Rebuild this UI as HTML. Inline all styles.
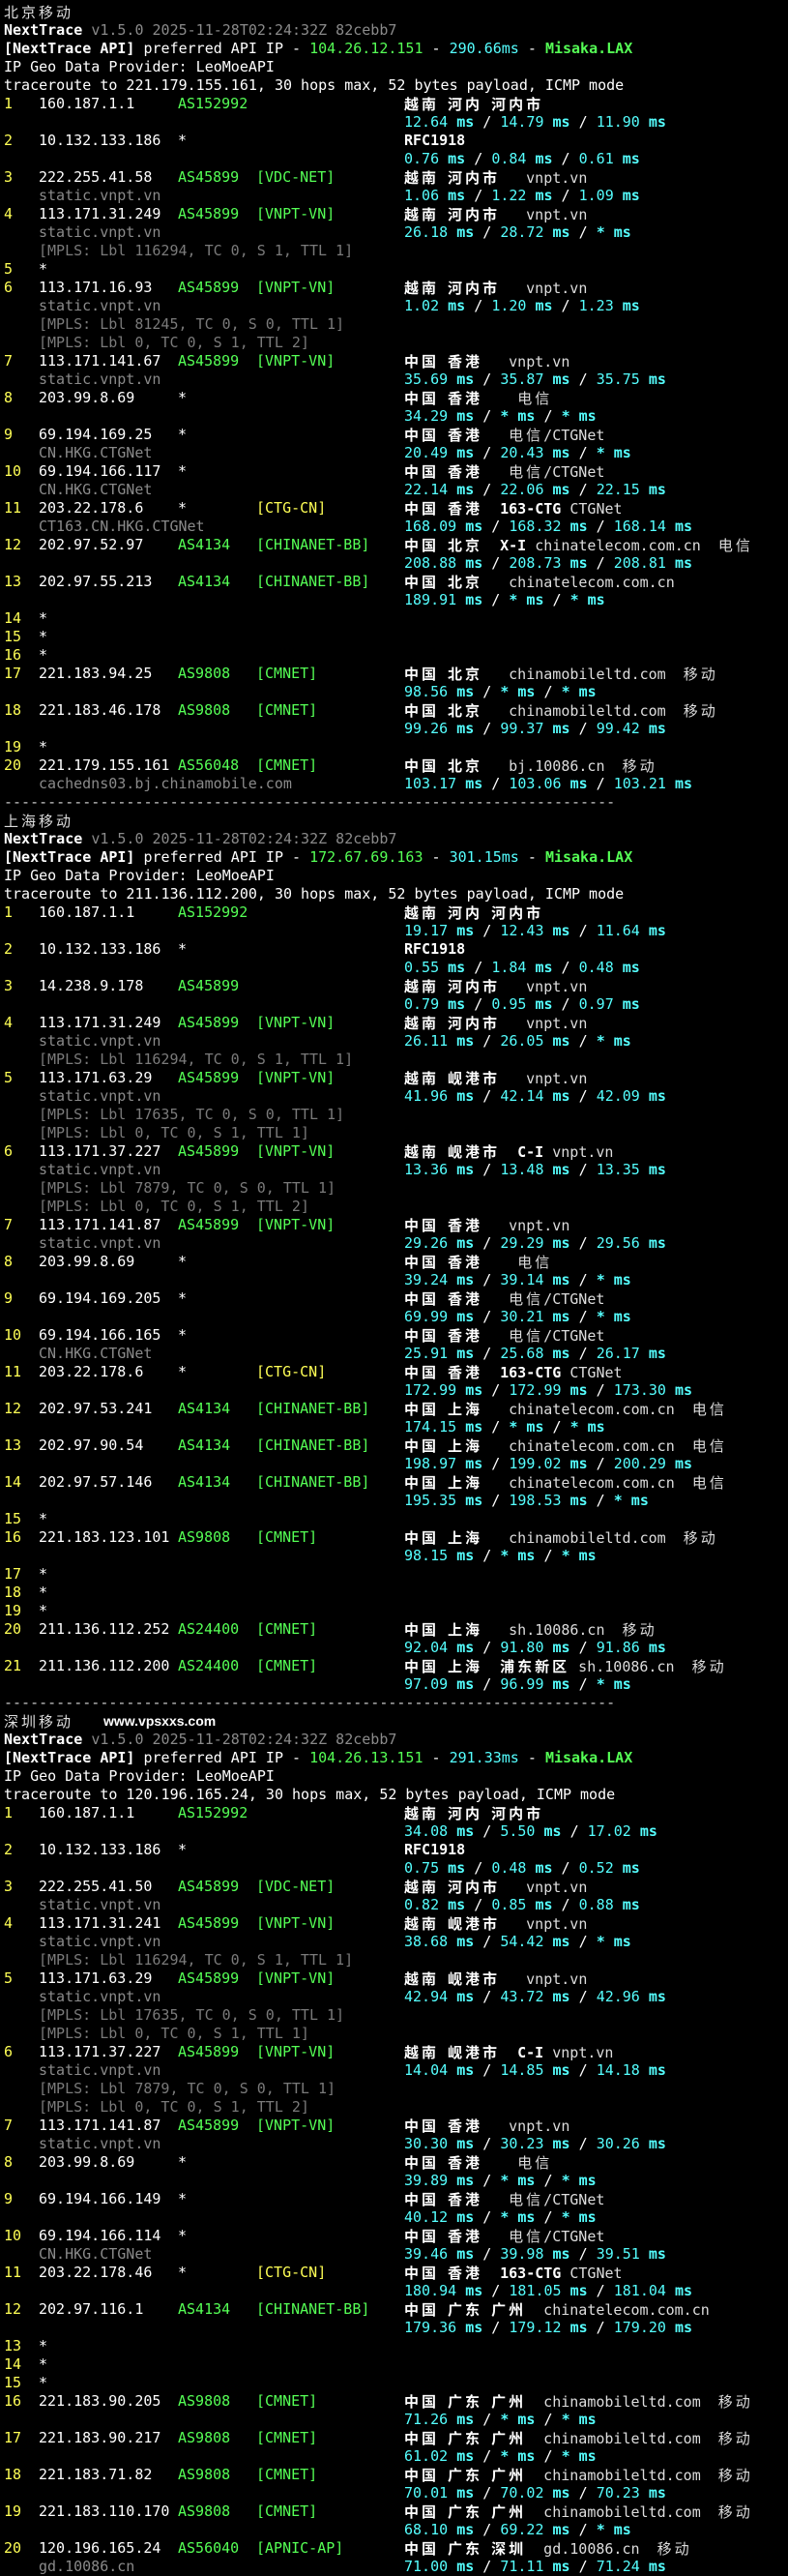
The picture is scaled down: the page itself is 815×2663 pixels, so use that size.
<!DOCTYPE html>
<html><head><meta charset="utf-8">
<style>
html,body{margin:0;padding:0;background:#000;}
body{width:815px;height:2648px;overflow:hidden;padding-top:3px;box-sizing:border-box;
font-family:"DejaVu Sans Mono","Liberation Mono","Noto Sans CJK SC",monospace;font-size:15px;color:#fff;}
.l{position:relative;height:19px;line-height:19px;white-space:pre;}
i{position:absolute;top:0;font-style:normal;white-space:pre;line-height:19px;}
.a0{left:4px}.a1{left:40px}.a2{left:184px}.a3{left:265px}.a4{left:418px}
.y{color:#ffff55}.g{color:#55ff55}.gr{color:#8a8a8a}.mp{color:#7a7a7a}.w{color:#ddd}
u{text-decoration:none;color:#55ffff}
.k{font-family:"Noto Sans CJK SC","WenQuanYi Zen Hei",sans-serif;letter-spacing:3px;font-size:15px}
.t{font-family:"Noto Sans CJK SC","WenQuanYi Zen Hei",sans-serif;letter-spacing:3px;font-weight:normal;color:#ddd}
.sep{color:#ccc}
.wm{font-family:"Liberation Sans",sans-serif;font-weight:bold;font-size:14px;left:107px}
</style></head><body>

<div class=l><i class="a0 t">北京移动</i></div>
<div class=l><i class=a0><b>NextTrace</b> <span class=gr>v1.5.0 2025-11-28T02:24:32Z 82cebb7</span></i></div>
<div class=l><i class=a0><b>[NextTrace API]</b> preferred API IP - <span class=g>104.26.12.151</span> - <u>290.66ms</u> - <b class=g>Misaka.LAX</b></i></div>
<div class=l><i class=a0>IP Geo Data Provider: LeoMoeAPI</i></div>
<div class=l><i class=a0>traceroute to 221.179.155.161, 30 hops max, 52 bytes payload, ICMP mode</i></div>
<div class=l><i class="a0 y">1</i><i class=a1>160.187.1.1</i><i class="a2 g">AS152992</i><i class=a4><b class=k>越南</b> <b class=k>河内</b> <b class=k>河内市</b></i></div>
<div class=l><i class=a4><u>12.64 <b>ms</b></u> / <u>14.79 <b>ms</b></u> / <u>11.90 <b>ms</b></u></i></div>
<div class=l><i class="a0 y">2</i><i class=a1>10.132.133.186</i><i class=a2>*</i><i class=a4><b>RFC1918</b></i></div>
<div class=l><i class=a4><u>0.76 <b>ms</b></u> / <u>0.84 <b>ms</b></u> / <u>0.61 <b>ms</b></u></i></div>
<div class=l><i class="a0 y">3</i><i class=a1>222.255.41.58</i><i class="a2 g">AS45899</i><i class="a3 g">[VDC-NET]</i><i class=a4><b class=k>越南</b> <b class=k>河内市</b>   <span class=w>vnpt.vn</span></i></div>
<div class=l><i class="a1 gr">static.vnpt.vn</i><i class=a4><u>1.06 <b>ms</b></u> / <u>1.22 <b>ms</b></u> / <u>1.09 <b>ms</b></u></i></div>
<div class=l><i class="a0 y">4</i><i class=a1>113.171.31.249</i><i class="a2 g">AS45899</i><i class="a3 g">[VNPT-VN]</i><i class=a4><b class=k>越南</b> <b class=k>河内市</b>   <span class=w>vnpt.vn</span></i></div>
<div class=l><i class="a1 gr">static.vnpt.vn</i><i class=a4><u>26.18 <b>ms</b></u> / <u>28.72 <b>ms</b></u> / <u><b>* ms</b></u></i></div>
<div class=l><i class="a1 mp">[MPLS: Lbl 116294, TC 0, S 1, TTL 1]</i></div>
<div class=l><i class="a0 y">5</i><i class=a1>*</i></div>
<div class=l><i class="a0 y">6</i><i class=a1>113.171.16.93</i><i class="a2 g">AS45899</i><i class="a3 g">[VNPT-VN]</i><i class=a4><b class=k>越南</b> <b class=k>河内市</b>   <span class=w>vnpt.vn</span></i></div>
<div class=l><i class="a1 gr">static.vnpt.vn</i><i class=a4><u>1.02 <b>ms</b></u> / <u>1.20 <b>ms</b></u> / <u>1.23 <b>ms</b></u></i></div>
<div class=l><i class="a1 mp">[MPLS: Lbl 81245, TC 0, S 0, TTL 1]</i></div>
<div class=l><i class="a1 mp">[MPLS: Lbl 0, TC 0, S 1, TTL 2]</i></div>
<div class=l><i class="a0 y">7</i><i class=a1>113.171.141.67</i><i class="a2 g">AS45899</i><i class="a3 g">[VNPT-VN]</i><i class=a4><b class=k>中国</b> <b class=k>香港</b>   <span class=w>vnpt.vn</span></i></div>
<div class=l><i class="a1 gr">static.vnpt.vn</i><i class=a4><u>35.69 <b>ms</b></u> / <u>35.87 <b>ms</b></u> / <u>35.75 <b>ms</b></u></i></div>
<div class=l><i class="a0 y">8</i><i class=a1>203.99.8.69</i><i class=a2>*</i><i class=a4><b class=k>中国</b> <b class=k>香港</b>    <span class=t>电信</span></i></div>
<div class=l><i class=a4><u>34.29 <b>ms</b></u> / <u><b>* ms</b></u> / <u><b>* ms</b></u></i></div>
<div class=l><i class="a0 y">9</i><i class=a1>69.194.169.25</i><i class=a2>*</i><i class=a4><b class=k>中国</b> <b class=k>香港</b>   <span class=t>电信</span><span class=w>/CTGNet</span></i></div>
<div class=l><i class="a1 gr">CN.HKG.CTGNet</i><i class=a4><u>20.49 <b>ms</b></u> / <u>20.43 <b>ms</b></u> / <u><b>* ms</b></u></i></div>
<div class=l><i class="a0 y">10</i><i class=a1>69.194.166.117</i><i class=a2>*</i><i class=a4><b class=k>中国</b> <b class=k>香港</b>   <span class=t>电信</span><span class=w>/CTGNet</span></i></div>
<div class=l><i class="a1 gr">CN.HKG.CTGNet</i><i class=a4><u>22.14 <b>ms</b></u> / <u>22.06 <b>ms</b></u> / <u>22.15 <b>ms</b></u></i></div>
<div class=l><i class="a0 y">11</i><i class=a1>203.22.178.6</i><i class=a2>*</i><i class="a3 y">[CTG-CN]</i><i class=a4><b class=k>中国</b> <b class=k>香港</b>  <b>163-CTG</b> <span class=w>CTGNet</span></i></div>
<div class=l><i class="a1 gr">CT163.CN.HKG.CTGNet</i><i class=a4><u>168.09 <b>ms</b></u> / <u>168.32 <b>ms</b></u> / <u>168.14 <b>ms</b></u></i></div>
<div class=l><i class="a0 y">12</i><i class=a1>202.97.52.97</i><i class="a2 g">AS4134</i><i class="a3 g">[CHINANET-BB]</i><i class=a4><b class=k>中国</b> <b class=k>北京</b>  <b>X-I</b> <span class=w>chinatelecom.com.cn</span>  <span class=t>电信</span></i></div>
<div class=l><i class=a4><u>208.88 <b>ms</b></u> / <u>208.73 <b>ms</b></u> / <u>208.81 <b>ms</b></u></i></div>
<div class=l><i class="a0 y">13</i><i class=a1>202.97.55.213</i><i class="a2 g">AS4134</i><i class="a3 g">[CHINANET-BB]</i><i class=a4><b class=k>中国</b> <b class=k>北京</b>   <span class=w>chinatelecom.com.cn</span></i></div>
<div class=l><i class=a4><u>189.91 <b>ms</b></u> / <u><b>* ms</b></u> / <u><b>* ms</b></u></i></div>
<div class=l><i class="a0 y">14</i><i class=a1>*</i></div>
<div class=l><i class="a0 y">15</i><i class=a1>*</i></div>
<div class=l><i class="a0 y">16</i><i class=a1>*</i></div>
<div class=l><i class="a0 y">17</i><i class=a1>221.183.94.25</i><i class="a2 g">AS9808</i><i class="a3 g">[CMNET]</i><i class=a4><b class=k>中国</b> <b class=k>北京</b>   <span class=w>chinamobileltd.com</span>  <span class=t>移动</span></i></div>
<div class=l><i class=a4><u>98.56 <b>ms</b></u> / <u><b>* ms</b></u> / <u><b>* ms</b></u></i></div>
<div class=l><i class="a0 y">18</i><i class=a1>221.183.46.178</i><i class="a2 g">AS9808</i><i class="a3 g">[CMNET]</i><i class=a4><b class=k>中国</b> <b class=k>北京</b>   <span class=w>chinamobileltd.com</span>  <span class=t>移动</span></i></div>
<div class=l><i class=a4><u>99.26 <b>ms</b></u> / <u>99.37 <b>ms</b></u> / <u>99.42 <b>ms</b></u></i></div>
<div class=l><i class="a0 y">19</i><i class=a1>*</i></div>
<div class=l><i class="a0 y">20</i><i class=a1>221.179.155.161</i><i class="a2 g">AS56048</i><i class="a3 g">[CMNET]</i><i class=a4><b class=k>中国</b> <b class=k>北京</b>   <span class=w>bj.10086.cn</span>  <span class=t>移动</span></i></div>
<div class=l><i class="a1 gr">cachedns03.bj.chinamobile.com</i><i class=a4><u>103.17 <b>ms</b></u> / <u>103.06 <b>ms</b></u> / <u>103.21 <b>ms</b></u></i></div>
<div class=l><i class="a0 sep">----------------------------------------------------------------------</i></div>

<div class=l><i class="a0 t">上海移动</i></div>
<div class=l><i class=a0><b>NextTrace</b> <span class=gr>v1.5.0 2025-11-28T02:24:32Z 82cebb7</span></i></div>
<div class=l><i class=a0><b>[NextTrace API]</b> preferred API IP - <span class=g>172.67.69.163</span> - <u>301.15ms</u> - <b class=g>Misaka.LAX</b></i></div>
<div class=l><i class=a0>IP Geo Data Provider: LeoMoeAPI</i></div>
<div class=l><i class=a0>traceroute to 211.136.112.200, 30 hops max, 52 bytes payload, ICMP mode</i></div>
<div class=l><i class="a0 y">1</i><i class=a1>160.187.1.1</i><i class="a2 g">AS152992</i><i class=a4><b class=k>越南</b> <b class=k>河内</b> <b class=k>河内市</b></i></div>
<div class=l><i class=a4><u>19.17 <b>ms</b></u> / <u>12.43 <b>ms</b></u> / <u>11.64 <b>ms</b></u></i></div>
<div class=l><i class="a0 y">2</i><i class=a1>10.132.133.186</i><i class=a2>*</i><i class=a4><b>RFC1918</b></i></div>
<div class=l><i class=a4><u>0.55 <b>ms</b></u> / <u>1.84 <b>ms</b></u> / <u>0.48 <b>ms</b></u></i></div>
<div class=l><i class="a0 y">3</i><i class=a1>14.238.9.178</i><i class="a2 g">AS45899</i><i class=a4><b class=k>越南</b> <b class=k>河内市</b>   <span class=w>vnpt.vn</span></i></div>
<div class=l><i class=a4><u>0.79 <b>ms</b></u> / <u>0.95 <b>ms</b></u> / <u>0.97 <b>ms</b></u></i></div>
<div class=l><i class="a0 y">4</i><i class=a1>113.171.31.249</i><i class="a2 g">AS45899</i><i class="a3 g">[VNPT-VN]</i><i class=a4><b class=k>越南</b> <b class=k>河内市</b>   <span class=w>vnpt.vn</span></i></div>
<div class=l><i class="a1 gr">static.vnpt.vn</i><i class=a4><u>26.11 <b>ms</b></u> / <u>26.05 <b>ms</b></u> / <u><b>* ms</b></u></i></div>
<div class=l><i class="a1 mp">[MPLS: Lbl 116294, TC 0, S 1, TTL 1]</i></div>
<div class=l><i class="a0 y">5</i><i class=a1>113.171.63.29</i><i class="a2 g">AS45899</i><i class="a3 g">[VNPT-VN]</i><i class=a4><b class=k>越南</b> <b class=k>岘港市</b>   <span class=w>vnpt.vn</span></i></div>
<div class=l><i class="a1 gr">static.vnpt.vn</i><i class=a4><u>41.96 <b>ms</b></u> / <u>42.14 <b>ms</b></u> / <u>42.09 <b>ms</b></u></i></div>
<div class=l><i class="a1 mp">[MPLS: Lbl 17635, TC 0, S 0, TTL 1]</i></div>
<div class=l><i class="a1 mp">[MPLS: Lbl 0, TC 0, S 1, TTL 1]</i></div>
<div class=l><i class="a0 y">6</i><i class=a1>113.171.37.227</i><i class="a2 g">AS45899</i><i class="a3 g">[VNPT-VN]</i><i class=a4><b class=k>越南</b> <b class=k>岘港市</b>  <b>C-I</b> <span class=w>vnpt.vn</span></i></div>
<div class=l><i class="a1 gr">static.vnpt.vn</i><i class=a4><u>13.36 <b>ms</b></u> / <u>13.48 <b>ms</b></u> / <u>13.35 <b>ms</b></u></i></div>
<div class=l><i class="a1 mp">[MPLS: Lbl 7879, TC 0, S 0, TTL 1]</i></div>
<div class=l><i class="a1 mp">[MPLS: Lbl 0, TC 0, S 1, TTL 2]</i></div>
<div class=l><i class="a0 y">7</i><i class=a1>113.171.141.87</i><i class="a2 g">AS45899</i><i class="a3 g">[VNPT-VN]</i><i class=a4><b class=k>中国</b> <b class=k>香港</b>   <span class=w>vnpt.vn</span></i></div>
<div class=l><i class="a1 gr">static.vnpt.vn</i><i class=a4><u>29.26 <b>ms</b></u> / <u>29.29 <b>ms</b></u> / <u>29.56 <b>ms</b></u></i></div>
<div class=l><i class="a0 y">8</i><i class=a1>203.99.8.69</i><i class=a2>*</i><i class=a4><b class=k>中国</b> <b class=k>香港</b>    <span class=t>电信</span></i></div>
<div class=l><i class=a4><u>39.24 <b>ms</b></u> / <u>39.14 <b>ms</b></u> / <u><b>* ms</b></u></i></div>
<div class=l><i class="a0 y">9</i><i class=a1>69.194.169.205</i><i class=a2>*</i><i class=a4><b class=k>中国</b> <b class=k>香港</b>   <span class=t>电信</span><span class=w>/CTGNet</span></i></div>
<div class=l><i class=a4><u>69.99 <b>ms</b></u> / <u>30.21 <b>ms</b></u> / <u><b>* ms</b></u></i></div>
<div class=l><i class="a0 y">10</i><i class=a1>69.194.166.165</i><i class=a2>*</i><i class=a4><b class=k>中国</b> <b class=k>香港</b>   <span class=t>电信</span><span class=w>/CTGNet</span></i></div>
<div class=l><i class="a1 gr">CN.HKG.CTGNet</i><i class=a4><u>25.91 <b>ms</b></u> / <u>25.68 <b>ms</b></u> / <u>26.17 <b>ms</b></u></i></div>
<div class=l><i class="a0 y">11</i><i class=a1>203.22.178.6</i><i class=a2>*</i><i class="a3 y">[CTG-CN]</i><i class=a4><b class=k>中国</b> <b class=k>香港</b>  <b>163-CTG</b> <span class=w>CTGNet</span></i></div>
<div class=l><i class=a4><u>172.99 <b>ms</b></u> / <u>172.99 <b>ms</b></u> / <u>173.30 <b>ms</b></u></i></div>
<div class=l><i class="a0 y">12</i><i class=a1>202.97.53.241</i><i class="a2 g">AS4134</i><i class="a3 g">[CHINANET-BB]</i><i class=a4><b class=k>中国</b> <b class=k>上海</b>   <span class=w>chinatelecom.com.cn</span>  <span class=t>电信</span></i></div>
<div class=l><i class=a4><u>174.15 <b>ms</b></u> / <u><b>* ms</b></u> / <u><b>* ms</b></u></i></div>
<div class=l><i class="a0 y">13</i><i class=a1>202.97.90.54</i><i class="a2 g">AS4134</i><i class="a3 g">[CHINANET-BB]</i><i class=a4><b class=k>中国</b> <b class=k>上海</b>   <span class=w>chinatelecom.com.cn</span>  <span class=t>电信</span></i></div>
<div class=l><i class=a4><u>198.97 <b>ms</b></u> / <u>199.02 <b>ms</b></u> / <u>200.29 <b>ms</b></u></i></div>
<div class=l><i class="a0 y">14</i><i class=a1>202.97.57.146</i><i class="a2 g">AS4134</i><i class="a3 g">[CHINANET-BB]</i><i class=a4><b class=k>中国</b> <b class=k>上海</b>   <span class=w>chinatelecom.com.cn</span>  <span class=t>电信</span></i></div>
<div class=l><i class=a4><u>195.35 <b>ms</b></u> / <u>198.53 <b>ms</b></u> / <u><b>* ms</b></u></i></div>
<div class=l><i class="a0 y">15</i><i class=a1>*</i></div>
<div class=l><i class="a0 y">16</i><i class=a1>221.183.123.101</i><i class="a2 g">AS9808</i><i class="a3 g">[CMNET]</i><i class=a4><b class=k>中国</b> <b class=k>上海</b>   <span class=w>chinamobileltd.com</span>  <span class=t>移动</span></i></div>
<div class=l><i class=a4><u>98.15 <b>ms</b></u> / <u><b>* ms</b></u> / <u><b>* ms</b></u></i></div>
<div class=l><i class="a0 y">17</i><i class=a1>*</i></div>
<div class=l><i class="a0 y">18</i><i class=a1>*</i></div>
<div class=l><i class="a0 y">19</i><i class=a1>*</i></div>
<div class=l><i class="a0 y">20</i><i class=a1>211.136.112.252</i><i class="a2 g">AS24400</i><i class="a3 g">[CMNET]</i><i class=a4><b class=k>中国</b> <b class=k>上海</b>   <span class=w>sh.10086.cn</span>  <span class=t>移动</span></i></div>
<div class=l><i class=a4><u>92.04 <b>ms</b></u> / <u>91.80 <b>ms</b></u> / <u>91.86 <b>ms</b></u></i></div>
<div class=l><i class="a0 y">21</i><i class=a1>211.136.112.200</i><i class="a2 g">AS24400</i><i class="a3 g">[CMNET]</i><i class=a4><b class=k>中国</b> <b class=k>上海</b>  <b class=k>浦东新区</b> <span class=w>sh.10086.cn</span>  <span class=t>移动</span></i></div>
<div class=l><i class=a4><u>97.09 <b>ms</b></u> / <u>96.99 <b>ms</b></u> / <u><b>* ms</b></u></i></div>
<div class=l><i class="a0 sep">----------------------------------------------------------------------</i></div>

<div class=l><i class="a0 t">深圳移动</i><i class=wm>www.vpsxxs.com</i></div>
<div class=l><i class=a0><b>NextTrace</b> <span class=gr>v1.5.0 2025-11-28T02:24:32Z 82cebb7</span></i></div>
<div class=l><i class=a0><b>[NextTrace API]</b> preferred API IP - <span class=g>104.26.13.151</span> - <u>291.33ms</u> - <b class=g>Misaka.LAX</b></i></div>
<div class=l><i class=a0>IP Geo Data Provider: LeoMoeAPI</i></div>
<div class=l><i class=a0>traceroute to 120.196.165.24, 30 hops max, 52 bytes payload, ICMP mode</i></div>
<div class=l><i class="a0 y">1</i><i class=a1>160.187.1.1</i><i class="a2 g">AS152992</i><i class=a4><b class=k>越南</b> <b class=k>河内</b> <b class=k>河内市</b></i></div>
<div class=l><i class=a4><u>34.08 <b>ms</b></u> / <u>5.50 <b>ms</b></u> / <u>17.02 <b>ms</b></u></i></div>
<div class=l><i class="a0 y">2</i><i class=a1>10.132.133.186</i><i class=a2>*</i><i class=a4><b>RFC1918</b></i></div>
<div class=l><i class=a4><u>0.75 <b>ms</b></u> / <u>0.48 <b>ms</b></u> / <u>0.52 <b>ms</b></u></i></div>
<div class=l><i class="a0 y">3</i><i class=a1>222.255.41.50</i><i class="a2 g">AS45899</i><i class="a3 g">[VDC-NET]</i><i class=a4><b class=k>越南</b> <b class=k>河内市</b>   <span class=w>vnpt.vn</span></i></div>
<div class=l><i class="a1 gr">static.vnpt.vn</i><i class=a4><u>0.82 <b>ms</b></u> / <u>0.85 <b>ms</b></u> / <u>0.88 <b>ms</b></u></i></div>
<div class=l><i class="a0 y">4</i><i class=a1>113.171.31.241</i><i class="a2 g">AS45899</i><i class="a3 g">[VNPT-VN]</i><i class=a4><b class=k>越南</b> <b class=k>岘港市</b>   <span class=w>vnpt.vn</span></i></div>
<div class=l><i class="a1 gr">static.vnpt.vn</i><i class=a4><u>38.68 <b>ms</b></u> / <u>54.42 <b>ms</b></u> / <u><b>* ms</b></u></i></div>
<div class=l><i class="a1 mp">[MPLS: Lbl 116294, TC 0, S 1, TTL 1]</i></div>
<div class=l><i class="a0 y">5</i><i class=a1>113.171.63.29</i><i class="a2 g">AS45899</i><i class="a3 g">[VNPT-VN]</i><i class=a4><b class=k>越南</b> <b class=k>岘港市</b>   <span class=w>vnpt.vn</span></i></div>
<div class=l><i class="a1 gr">static.vnpt.vn</i><i class=a4><u>42.94 <b>ms</b></u> / <u>43.72 <b>ms</b></u> / <u>42.96 <b>ms</b></u></i></div>
<div class=l><i class="a1 mp">[MPLS: Lbl 17635, TC 0, S 0, TTL 1]</i></div>
<div class=l><i class="a1 mp">[MPLS: Lbl 0, TC 0, S 1, TTL 1]</i></div>
<div class=l><i class="a0 y">6</i><i class=a1>113.171.37.227</i><i class="a2 g">AS45899</i><i class="a3 g">[VNPT-VN]</i><i class=a4><b class=k>越南</b> <b class=k>岘港市</b>  <b>C-I</b> <span class=w>vnpt.vn</span></i></div>
<div class=l><i class="a1 gr">static.vnpt.vn</i><i class=a4><u>14.04 <b>ms</b></u> / <u>14.85 <b>ms</b></u> / <u>14.18 <b>ms</b></u></i></div>
<div class=l><i class="a1 mp">[MPLS: Lbl 7879, TC 0, S 0, TTL 1]</i></div>
<div class=l><i class="a1 mp">[MPLS: Lbl 0, TC 0, S 1, TTL 2]</i></div>
<div class=l><i class="a0 y">7</i><i class=a1>113.171.141.87</i><i class="a2 g">AS45899</i><i class="a3 g">[VNPT-VN]</i><i class=a4><b class=k>中国</b> <b class=k>香港</b>   <span class=w>vnpt.vn</span></i></div>
<div class=l><i class="a1 gr">static.vnpt.vn</i><i class=a4><u>30.30 <b>ms</b></u> / <u>30.23 <b>ms</b></u> / <u>30.26 <b>ms</b></u></i></div>
<div class=l><i class="a0 y">8</i><i class=a1>203.99.8.69</i><i class=a2>*</i><i class=a4><b class=k>中国</b> <b class=k>香港</b>    <span class=t>电信</span></i></div>
<div class=l><i class=a4><u>39.89 <b>ms</b></u> / <u><b>* ms</b></u> / <u><b>* ms</b></u></i></div>
<div class=l><i class="a0 y">9</i><i class=a1>69.194.166.149</i><i class=a2>*</i><i class=a4><b class=k>中国</b> <b class=k>香港</b>   <span class=t>电信</span><span class=w>/CTGNet</span></i></div>
<div class=l><i class=a4><u>40.12 <b>ms</b></u> / <u><b>* ms</b></u> / <u><b>* ms</b></u></i></div>
<div class=l><i class="a0 y">10</i><i class=a1>69.194.166.114</i><i class=a2>*</i><i class=a4><b class=k>中国</b> <b class=k>香港</b>   <span class=t>电信</span><span class=w>/CTGNet</span></i></div>
<div class=l><i class="a1 gr">CN.HKG.CTGNet</i><i class=a4><u>39.46 <b>ms</b></u> / <u>39.98 <b>ms</b></u> / <u>39.51 <b>ms</b></u></i></div>
<div class=l><i class="a0 y">11</i><i class=a1>203.22.178.46</i><i class=a2>*</i><i class="a3 y">[CTG-CN]</i><i class=a4><b class=k>中国</b> <b class=k>香港</b>  <b>163-CTG</b> <span class=w>CTGNet</span></i></div>
<div class=l><i class=a4><u>180.94 <b>ms</b></u> / <u>181.05 <b>ms</b></u> / <u>181.04 <b>ms</b></u></i></div>
<div class=l><i class="a0 y">12</i><i class=a1>202.97.116.1</i><i class="a2 g">AS4134</i><i class="a3 g">[CHINANET-BB]</i><i class=a4><b class=k>中国</b> <b class=k>广东</b> <b class=k>广州</b>  <span class=w>chinatelecom.com.cn</span></i></div>
<div class=l><i class=a4><u>179.36 <b>ms</b></u> / <u>179.12 <b>ms</b></u> / <u>179.20 <b>ms</b></u></i></div>
<div class=l><i class="a0 y">13</i><i class=a1>*</i></div>
<div class=l><i class="a0 y">14</i><i class=a1>*</i></div>
<div class=l><i class="a0 y">15</i><i class=a1>*</i></div>
<div class=l><i class="a0 y">16</i><i class=a1>221.183.90.205</i><i class="a2 g">AS9808</i><i class="a3 g">[CMNET]</i><i class=a4><b class=k>中国</b> <b class=k>广东</b> <b class=k>广州</b>  <span class=w>chinamobileltd.com</span>  <span class=t>移动</span></i></div>
<div class=l><i class=a4><u>71.26 <b>ms</b></u> / <u><b>* ms</b></u> / <u><b>* ms</b></u></i></div>
<div class=l><i class="a0 y">17</i><i class=a1>221.183.90.217</i><i class="a2 g">AS9808</i><i class="a3 g">[CMNET]</i><i class=a4><b class=k>中国</b> <b class=k>广东</b> <b class=k>广州</b>  <span class=w>chinamobileltd.com</span>  <span class=t>移动</span></i></div>
<div class=l><i class=a4><u>61.02 <b>ms</b></u> / <u><b>* ms</b></u> / <u><b>* ms</b></u></i></div>
<div class=l><i class="a0 y">18</i><i class=a1>221.183.71.82</i><i class="a2 g">AS9808</i><i class="a3 g">[CMNET]</i><i class=a4><b class=k>中国</b> <b class=k>广东</b> <b class=k>广州</b>  <span class=w>chinamobileltd.com</span>  <span class=t>移动</span></i></div>
<div class=l><i class=a4><u>70.01 <b>ms</b></u> / <u>70.02 <b>ms</b></u> / <u>70.23 <b>ms</b></u></i></div>
<div class=l><i class="a0 y">19</i><i class=a1>221.183.110.170</i><i class="a2 g">AS9808</i><i class="a3 g">[CMNET]</i><i class=a4><b class=k>中国</b> <b class=k>广东</b> <b class=k>广州</b>  <span class=w>chinamobileltd.com</span>  <span class=t>移动</span></i></div>
<div class=l><i class=a4><u>68.10 <b>ms</b></u> / <u>69.22 <b>ms</b></u> / <u><b>* ms</b></u></i></div>
<div class=l><i class="a0 y">20</i><i class=a1>120.196.165.24</i><i class="a2 g">AS56040</i><i class="a3 g">[APNIC-AP]</i><i class=a4><b class=k>中国</b> <b class=k>广东</b> <b class=k>深圳</b>  <span class=w>gd.10086.cn</span>  <span class=t>移动</span></i></div>
<div class=l><i class="a1 gr">gd.10086.cn</i><i class=a4><u>71.00 <b>ms</b></u> / <u>71.11 <b>ms</b></u> / <u>71.24 <b>ms</b></u></i></div>

</body></html>
